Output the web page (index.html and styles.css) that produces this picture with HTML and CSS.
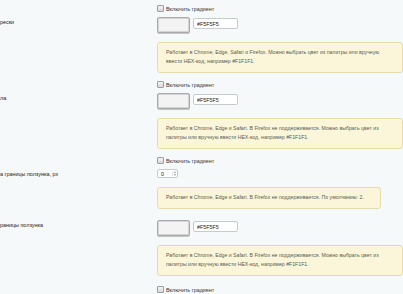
FILE: index.html
```html
<!DOCTYPE html>
<html lang="ru">
<head>
    <meta charset="UTF-8">
    <meta name="viewport" content="width=device-width, initial-scale=1.0">
    <title>Настройки полосы прокрутки</title>
    <link rel="stylesheet" href="styles.css">
</head>
<body>
    <div class="settings">
        <div class="row row-check">
            <div class="row-label"></div>
            <div class="row-field">
                <label class="check"><span class="check-box"></span>Включить градиент</label>
            </div>
        </div>

        <div class="row row-setting">
            <div class="row-label">рески</div>
            <div class="row-field">
                <div class="color-pick">
                    <span class="swatch"></span>
                    <input class="hex" type="text" value="#F5F5F5">
                </div>
                <div class="note">Работает в Chrome, Edge, Safari и Firefox. Можно выбрать цвет из палитры или вручную ввести HEX-код, например #F1F1F1.</div>
            </div>
        </div>

        <div class="row row-check">
            <div class="row-label"></div>
            <div class="row-field">
                <label class="check"><span class="check-box"></span>Включить градиент</label>
            </div>
        </div>

        <div class="row row-setting">
            <div class="row-label">ла</div>
            <div class="row-field">
                <div class="color-pick">
                    <span class="swatch"></span>
                    <input class="hex" type="text" value="#F5F5F5">
                </div>
                <div class="note">Работает в Chrome, Edge и Safari. В Firefox не поддерживается. Можно выбрать цвет из палитры или вручную ввести HEX-код, например #F1F1F1.</div>
            </div>
        </div>

        <div class="row row-check">
            <div class="row-label"></div>
            <div class="row-field">
                <label class="check"><span class="check-box"></span>Включить градиент</label>
            </div>
        </div>

        <div class="row row-setting">
            <div class="row-label">а границы ползунка, px</div>
            <div class="row-field">
                <div class="num">
                    <span class="num-value">0</span>
                    <span class="num-spin"><i class="up"></i><i class="down"></i></span>
                </div>
                <div class="note">Работает в Chrome, Edge и Safari. В Firefox не поддерживается. По умолчанию: 2.</div>
            </div>
        </div>

        <div class="row row-setting row-after-number">
            <div class="row-label">раницы ползунка</div>
            <div class="row-field">
                <div class="color-pick">
                    <span class="swatch"></span>
                    <input class="hex" type="text" value="#F5F5F5">
                </div>
                <div class="note">Работает в Chrome, Edge и Safari. В Firefox не поддерживается. Можно выбрать цвет из палитры или вручную ввести HEX-код, например #F1F1F1.</div>
            </div>
        </div>

        <div class="row row-check">
            <div class="row-label"></div>
            <div class="row-field">
                <label class="check"><span class="check-box"></span>Включить градиент</label>
            </div>
        </div>
    </div>
</body>
</html>
```

FILE: styles.css
```css
body {
    margin: 0;
    background-color: #f5f9f9;
    font-family: "Liberation Sans", Arial, sans-serif;
    font-size: 5.4px;
    color: #333;
    overflow: hidden;
}

.settings {
    padding-top: 4px;
}

.row {
    display: flex;
}

.row-label {
    width: 157px;
    flex-shrink: 0;
    line-height: 10px;
    color: #222;
    white-space: nowrap;
    overflow: hidden;
}

.row-field {
    flex: 1;
    min-width: 0;
}

.row-setting {
    margin-top: 4px;
}

.row-check {
    margin-top: 7px;
}

.row-check:first-child {
    margin-top: 0;
}

.row-check:last-child {
    margin-top: 9px;
}

.row-after-number {
    margin-top: 11px;
}

/* checkbox */
.check {
    display: flex;
    align-items: center;
    gap: 2px;
    height: 9px;
    color: #333;
}

.check-box {
    width: 5px;
    height: 5px;
    border: 1px solid #9d9d9d;
    border-radius: 1px;
    background: linear-gradient(#f4f4f4, #d9d9d9);
}

/* color picker */
.color-pick {
    display: flex;
    align-items: flex-start;
    gap: 3px;
}

.swatch {
    box-sizing: border-box;
    width: 33px;
    height: 16px;
    border: 1px solid #aaa;
    border-radius: 2px;
    background-color: #f3f3f3;
    box-shadow: inset 0 0 0 1px #d4d4d4, 0 1px 0 #c4c4c4;
}

.hex {
    box-sizing: border-box;
    width: 45px;
    height: 11px;
    margin: 1px 0 0;
    padding: 0 3px;
    border: 1px solid #c6cbcb;
    border-radius: 2px;
    background: #fff;
    font-family: inherit;
    font-size: 5.4px;
    color: #222;
    outline: none;
}

/* number */
.num {
    box-sizing: border-box;
    display: flex;
    align-items: center;
    justify-content: space-between;
    width: 21px;
    height: 9px;
    padding: 0 1px 0 3px;
    border: 1px solid #c6cbcb;
    border-radius: 2px;
    background: #fff;
    color: #222;
}

.num-spin {
    display: flex;
    flex-direction: column;
    gap: 1px;
    padding-left: 1px;
    border-left: 1px solid #e3e3e3;
}

.num-spin i {
    width: 0;
    height: 0;
    border-left: 1.5px solid transparent;
    border-right: 1.5px solid transparent;
}

.num-spin .up {
    border-bottom: 2px solid #9a9a9a;
}

.num-spin .down {
    border-top: 2px solid #9a9a9a;
}

/* note */
.note {
    box-sizing: border-box;
    width: fit-content;
    max-width: 246px;
    margin-top: 9px;
    padding: 5px 16px 6px 8px;
    border: 1px solid #e6dca8;
    border-radius: 3px;
    background-color: #fbf6d9;
    color: #5b5b4e;
    font-size: 5.2px;
    line-height: 9px;
}
```
